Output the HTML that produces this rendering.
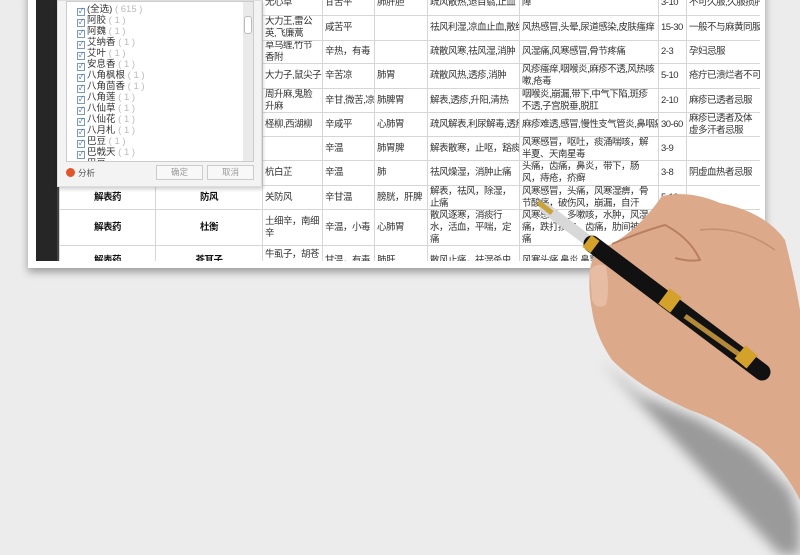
<!DOCTYPE html>
<html><head><meta charset="utf-8"><style>
*{margin:0;padding:0;box-sizing:border-box}
body{width:800px;height:555px;background:#ececec;position:relative;overflow:hidden;font-family:"Liberation Sans","Noto Sans CJK SC",sans-serif;color:#333}
.sheet{position:absolute;left:28px;top:-10px;width:737px;height:278px;background:#fff;box-shadow:0 4px 8px rgba(0,0,0,.35)}
.strip{position:absolute;left:36px;top:0;width:21px;height:261px;background:#262626}
.clip{position:absolute;left:57px;top:0;width:703px;height:261px;overflow:hidden;border-left:2px solid #444}
table{position:absolute;left:0;top:-10px;width:703px;border-collapse:collapse;table-layout:fixed;font-size:9.5px;line-height:12px;letter-spacing:-0.5px}
td{border:1px solid #d6d6d6;padding:0;overflow:hidden;vertical-align:middle}
td>div{overflow:hidden;display:flex;align-items:center;padding:0 2px}
td.b{font-weight:bold;color:#111}
td.b>div{justify-content:center}
.n{white-space:nowrap}
.panel{position:absolute;left:57px;top:0;width:205px;height:187px;background:#f3f3f3;box-shadow:1px 2px 4px rgba(0,0,0,.2);border:1px solid #ddd}
.list{position:absolute;left:8px;top:0;width:188px;height:161px;background:#fff;border:1px solid #ccc;overflow:hidden}
.it{position:absolute;left:10px;font-size:9.5px;height:11px;line-height:11px;white-space:nowrap;color:#333}
.it i{display:inline-block;width:8px;height:8px;border:1px solid #7a9ac0;vertical-align:-1px;margin-right:2px;font-style:normal;font-size:7px;line-height:6px;color:#2a5da8;text-align:center}
.it span{color:#bbb}
.sb{position:absolute;right:0;top:0;width:10px;height:159px;background:#eaeaea}
.th{position:absolute;right:1px;top:14px;width:8px;height:18px;background:#fff;border:1px solid #bbb;border-radius:3px}
.btn{position:absolute;top:164px;width:47px;height:15px;border:1px solid #ccc;background:#f8f8f8;font-size:8.5px;color:#999;text-align:center;line-height:13px}
</style></head><body>
<div class="sheet"></div>
<div class="strip"></div>
<div class="clip">
<table>
<colgroup><col style="width:96px"><col style="width:107px"><col style="width:60px"><col style="width:52px"><col style="width:53px"><col style="width:92px"><col style="width:139px"><col style="width:28px"><col style="width:76px"></colgroup>
<tr><td><div style="height:24px"></div></td><td><div style="height:24px"></div></td><td><div style="height:24px">无心草</div></td><td><div style="height:24px">甘苦平</div></td><td><div style="height:24px">肺肝胆</div></td><td><div class="n" style="height:24px">疏风散热,退目翳,止血</div></td><td><div style="height:24px">障</div></td><td><div style="height:24px">3-10</div></td><td><div class="n" style="height:24px">不可久服,久服损肝</div></td></tr>
<tr><td><div style="height:24px"></div></td><td><div style="height:24px"></div></td><td><div style="height:24px">大力王,雷公英,飞廉蒿</div></td><td><div style="height:24px">咸苦平</div></td><td><div style="height:24px"></div></td><td><div class="n" style="height:24px">祛风利湿,凉血止血,散结</div></td><td><div class="n" style="height:24px">风热感冒,头晕,尿道感染,皮肤瘙痒</div></td><td><div class="n" style="height:24px">15-30</div></td><td><div class="n" style="height:24px">一般不与麻黄同服</div></td></tr>
<tr><td><div style="height:22px"></div></td><td><div style="height:22px"></div></td><td><div style="height:22px">草乌缠,竹节香附</div></td><td><div class="n" style="height:22px">辛热，有毒</div></td><td><div style="height:22px"></div></td><td><div class="n" style="height:22px">疏散风寒,祛风湿,消肿</div></td><td><div style="height:22px">风湿痛,风寒感冒,骨节疼痛</div></td><td><div style="height:22px">2-3</div></td><td><div style="height:22px">孕妇忌服</div></td></tr>
<tr><td><div style="height:24px"></div></td><td><div style="height:24px"></div></td><td><div class="n" style="height:24px">大力子,鼠尖子</div></td><td><div style="height:24px">辛苦凉</div></td><td><div style="height:24px">肺胃</div></td><td><div class="n" style="height:24px">疏散风热,透疹,消肿</div></td><td><div style="height:24px">风疹瘙痒,咽喉炎,麻疹不透,风热咳嗽,疮毒</div></td><td><div style="height:24px">5-10</div></td><td><div class="n" style="height:24px">疮疔已溃烂者不可用</div></td></tr>
<tr><td><div style="height:23px"></div></td><td><div style="height:23px"></div></td><td><div style="height:23px">周升麻,鬼脸升麻</div></td><td><div class="n" style="height:23px">辛甘,微苦,凉</div></td><td><div style="height:23px">肺脾胃</div></td><td><div class="n" style="height:23px">解表,透疹,升阳,清热</div></td><td><div style="height:23px">咽喉炎,崩漏,带下,中气下陷,斑疹不透,子宫脱垂,脱肛</div></td><td><div style="height:23px">2-10</div></td><td><div class="n" style="height:23px">麻疹已透者忌服</div></td></tr>
<tr><td><div style="height:23px"></div></td><td><div style="height:23px"></div></td><td><div class="n" style="height:23px">柽柳,西湖柳</div></td><td><div style="height:23px">辛咸平</div></td><td><div style="height:23px">心肺胃</div></td><td><div class="n" style="height:23px">疏风解表,利尿解毒,透疹</div></td><td><div class="n" style="height:23px">麻疹难透,感冒,慢性支气管炎,鼻咽癌</div></td><td><div class="n" style="height:23px">30-60</div></td><td><div style="height:23px">麻疹已透者及体虚多汗者忌服</div></td></tr>
<tr><td><div style="height:23px"></div></td><td><div style="height:23px"></div></td><td><div style="height:23px"></div></td><td><div style="height:23px">辛温</div></td><td><div style="height:23px">肺胃脾</div></td><td><div class="n" style="height:23px">解表散寒，止呕，豁痰</div></td><td><div style="height:23px">风寒感冒，呕吐，痰涌喘咳，解半夏、天南星毒</div></td><td><div style="height:23px">3-9</div></td><td><div style="height:23px"></div></td></tr>
<tr><td><div style="height:24px"></div></td><td><div style="height:24px"></div></td><td><div style="height:24px">杭白芷</div></td><td><div style="height:24px">辛温</div></td><td><div style="height:24px">肺</div></td><td><div class="n" style="height:24px">祛风燥湿，消肿止痛</div></td><td><div style="height:24px">头痛，齿痛，鼻炎，带下，肠风，痔疮，疥癣</div></td><td><div style="height:24px">3-8</div></td><td><div class="n" style="height:24px">阴虚血热者忌服</div></td></tr>
<tr><td class="b"><div style="height:23px">解表药</div></td><td class="b"><div style="height:23px">防风</div></td><td><div style="height:23px">关防风</div></td><td><div style="height:23px">辛甘温</div></td><td><div class="n" style="height:23px">膀胱，肝脾</div></td><td><div style="height:23px">解表，祛风，除湿，止痛</div></td><td><div style="height:23px">风寒感冒，头痛，风寒湿痹，骨节酸痛，破伤风，崩漏，自汗</div></td><td><div style="height:23px">5-10</div></td><td><div style="height:23px"></div></td></tr>
<tr><td class="b"><div style="height:35px">解表药</div></td><td class="b"><div style="height:35px">杜衡</div></td><td><div style="height:35px">土细辛，南细辛</div></td><td><div class="n" style="height:35px">辛温，小毒</div></td><td><div style="height:35px">心肺胃</div></td><td><div style="height:35px">散风逐寒，消痰行水，活血，平喘，定痛</div></td><td><div style="height:35px">风寒感冒，多嗽咳，水肿，风湿痛，跌打损伤，齿痛，肋间神经痛</div></td><td><div style="height:35px">1-3</div></td><td><div style="height:35px"></div></td></tr>
<tr><td class="b"><div style="height:29px">解表药</div></td><td class="b"><div style="height:29px">苍耳子</div></td><td><div style="height:29px">牛虱子，胡苍子</div></td><td><div class="n" style="height:29px">甘温，有毒</div></td><td><div style="height:29px">肺肝</div></td><td><div class="n" style="height:29px">散风止痛，祛湿杀虫</div></td><td><div style="height:29px">风寒头痛,鼻炎,鼻窦炎,风疹瘙痒</div></td><td><div style="height:29px">5-10</div></td><td><div style="height:29px"></div></td></tr>
</table>
</div>
<div class="panel">
<div class="list">
<div class="it" style="top:2px"><i>✓</i>(全选) <span>( 615 )</span></div>
<div class="it" style="top:13px"><i>✓</i>阿胶 <span>( 1 )</span></div>
<div class="it" style="top:24px"><i>✓</i>阿魏 <span>( 1 )</span></div>
<div class="it" style="top:35px"><i>✓</i>艾纳香 <span>( 1 )</span></div>
<div class="it" style="top:46px"><i>✓</i>艾叶 <span>( 1 )</span></div>
<div class="it" style="top:57px"><i>✓</i>安息香 <span>( 1 )</span></div>
<div class="it" style="top:68px"><i>✓</i>八角枫根 <span>( 1 )</span></div>
<div class="it" style="top:79px"><i>✓</i>八角茴香 <span>( 1 )</span></div>
<div class="it" style="top:90px"><i>✓</i>八角莲 <span>( 1 )</span></div>
<div class="it" style="top:101px"><i>✓</i>八仙草 <span>( 1 )</span></div>
<div class="it" style="top:112px"><i>✓</i>八仙花 <span>( 1 )</span></div>
<div class="it" style="top:123px"><i>✓</i>八月札 <span>( 1 )</span></div>
<div class="it" style="top:134px"><i>✓</i>巴豆 <span>( 1 )</span></div>
<div class="it" style="top:145px"><i>✓</i>巴戟天 <span>( 1 )</span></div>
<div class="it" style="top:156px"><i>✓</i>巴豆</div>
<div class="sb"><div class="th"></div></div>
</div>
<div style="position:absolute;left:8px;top:166px;font-size:8.5px;color:#555"><span style="display:inline-block;width:9px;height:9px;border-radius:50%;background:#e0552a;vertical-align:-1px;margin-right:3px"></span>分析</div>
<div class="btn" style="left:98px">确定</div>
<div class="btn" style="left:149px">取消</div>
</div>
<svg style="position:absolute;left:0;top:0" width="800" height="555">
<defs><filter id="sh" x="-20%" y="-20%" width="140%" height="140%"><feGaussianBlur stdDeviation="6"/></filter></defs>
<path d="M600,360 L640,395 L700,420 L750,450 L790,490 L800,520 L800,555 L780,555 Z" fill="rgba(0,0,0,.35)" filter="url(#sh)"/>
<path d="M590,270 Q592,250 612,244 Q640,228 662,196 Q690,190 720,203 Q765,212 785,240 Q795,280 800,310 L800,500 Q785,470 760,448 Q720,420 690,410 Q640,388 612,360 Q595,335 592,310 Q588,290 590,270 Z" fill="#dcaa8a"/>
<path d="M612,244 Q640,232 665,225 Q690,238 700,260 Q690,262 675,258" fill="none" stroke="#b97f62" stroke-width="2"/>
<path d="M590,270 Q596,262 606,266 Q610,290 606,305 Q596,310 592,300 Z" fill="#e6bda3"/>
<path d="M700,230 Q740,225 775,250" fill="none" stroke="#c48e72" stroke-width="1.5"/>
<line x1="545" y1="208" x2="590" y2="242" stroke="#d8d8d8" stroke-width="11" stroke-linecap="round"/>
<line x1="538" y1="202" x2="552" y2="213" stroke="#c9a23a" stroke-width="5"/>
<line x1="592" y1="244" x2="762" y2="372" stroke="#111" stroke-width="17" stroke-linecap="round"/>
<line x1="587" y1="241" x2="595" y2="247" stroke="#d4a12a" stroke-width="15"/>
<line x1="664" y1="296" x2="676" y2="305" stroke="#d4a12a" stroke-width="19"/>
<line x1="685" y1="316" x2="740" y2="355" stroke="#b48a3a" stroke-width="5"/>
<line x1="740" y1="352" x2="752" y2="362" stroke="#d4a12a" stroke-width="17"/>
</svg>
</body></html>
